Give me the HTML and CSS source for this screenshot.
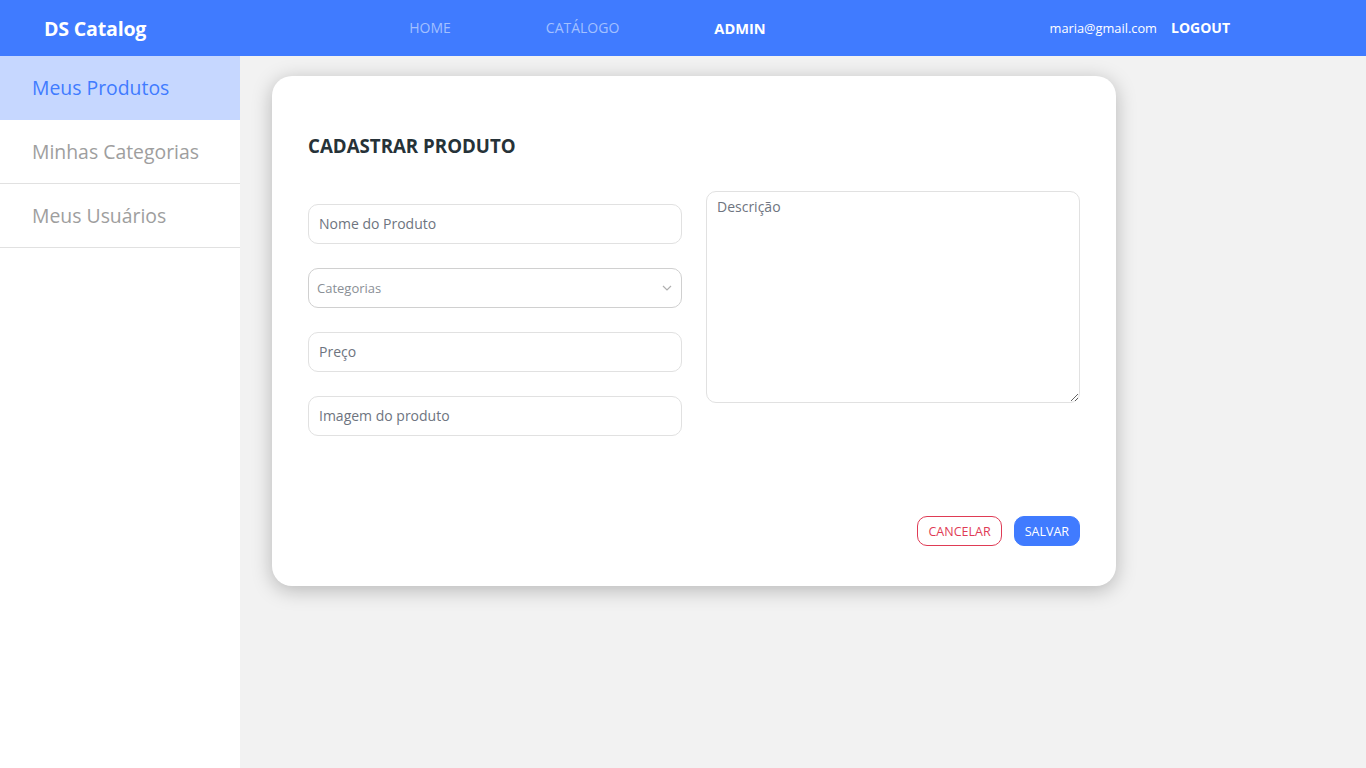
FILE: index.html
```html
<!DOCTYPE html>
<html lang="pt-BR">
<head>
<meta charset="utf-8">
<title>DS Catalog</title>
<link rel="stylesheet" href="styles.css">
</head>
<body>
<header class="navbar">
  <a class="brand" href="#">DS Catalog</a>
  <nav class="nav-links">
    <a href="#" class="nav-link">HOME</a>
    <a href="#" class="nav-link">CATÁLOGO</a>
    <a href="#" class="nav-link active">ADMIN</a>
  </nav>
  <div class="nav-user">
    <span class="user-email">maria@gmail.com</span>
    <a href="#" class="logout">LOGOUT</a>
  </div>
</header>
<div class="layout">
  <aside class="sidebar">
    <a href="#" class="side-item active">Meus Produtos</a>
    <a href="#" class="side-item">Minhas Categorias</a>
    <a href="#" class="side-item">Meus Usuários</a>
  </aside>
  <main class="content">
    <section class="card">
      <h1 class="card-title">CADASTRAR PRODUTO</h1>
      <form class="form-grid">
        <div class="col-left">
          <input class="field" type="text" placeholder="Nome do Produto">
          <div class="select-wrap">
            <select class="field select">
              <option>Categorias</option>
            </select>
            <svg class="chev" width="10" height="6" viewBox="0 0 10 6"><path d="M1 1l4 4 4-4" fill="none" stroke="#b0b0b0" stroke-width="1.2"/></svg>
          </div>
          <input class="field" type="text" placeholder="Preço">
          <input class="field" type="text" placeholder="Imagem do produto">
        </div>
        <div class="col-right">
          <textarea class="field textarea" placeholder="Descrição"></textarea>
        </div>
      </form>
      <div class="actions">
        <button class="btn btn-cancel" type="button">CANCELAR</button>
        <button class="btn btn-save" type="button">SALVAR</button>
      </div>
    </section>
  </main>
</div>
</body>
</html>
```
FILE: styles.css
```css
* { box-sizing: border-box; }
html, body { margin: 0; padding: 0; height: 100%; }
body {
  font-family: "Open Sans", "Noto Sans", sans-serif;
  background: #f2f2f2;
  color: #263238;
}
a { text-decoration: none; }

.navbar {
  height: 56px;
  background: #407bff;
  display: flex;
  align-items: center;
  padding: 0 136px 0 44px;
}
.brand {
  color: #fff;
  font-weight: 700;
  font-size: 19.6px;
  letter-spacing: -0.2px;
}
.nav-links {
  display: flex;
  gap: 95px;
  margin-left: 263px;
}
.nav-link {
  color: #a3c0ff;
  font-size: 14px;
}
.nav-link.active {
  color: #fff;
  font-weight: 700;
  font-size: 14.6px;
}
.nav-user {
  margin-left: auto;
  display: flex;
  align-items: center;
  gap: 14px;
}
.user-email {
  color: #fff;
  font-size: 12.8px;
}
.logout {
  color: #fff;
  font-weight: 700;
  font-size: 14px;
  margin-top: -2px;
}

.layout {
  display: flex;
  height: calc(100% - 56px);
}
.sidebar {
  width: 240px;
  background: #fff;
  display: flex;
  flex-direction: column;
  flex-shrink: 0;
}
.side-item {
  height: 64px;
  display: flex;
  align-items: center;
  padding-left: 32px;
  font-size: 19.4px;
  color: #9e9e9e;
  border-bottom: 1px solid #e1e1e1;
}
.side-item.active {
  background: #c6d7ff;
  color: #407bff;
  border-bottom-color: #c6d7ff;
}

.content {
  flex: 1;
  padding: 20px 32px;
}
.card {
  width: 844px;
  background: #fff;
  border-radius: 20px;
  box-shadow: 0 4px 20px rgba(0, 0, 0, 0.25);
  padding: 56px 36px 40px;
}
.card-title {
  margin: 0;
  font-size: 18.7px;
  font-weight: 700;
  line-height: 28px;
  color: #263238;
}
.form-grid {
  display: grid;
  grid-template-columns: 374px 374px;
  gap: 24px;
  margin-top: 31px;
}
.col-left {
  display: flex;
  flex-direction: column;
  gap: 24px;
  padding-top: 13px;
}
.field {
  width: 100%;
  height: 40px;
  border: 1px solid #e1e1e1;
  border-radius: 10px;
  background: #fff;
  padding: 0 10px 1px;
  font-family: "Open Sans", "Noto Sans", sans-serif;
  font-size: 14px;
  color: #263238;
  outline: none;
}
.field::placeholder { color: #6e7480; }
.select-wrap { position: relative; }
.select {
  appearance: none;
  -webkit-appearance: none;
  font-size: 13px;
  color: #8a8f96;
  padding-left: 8px;
  border-color: #d0d0d0;
}
.chev {
  position: absolute;
  right: 10px;
  top: 17px;
  pointer-events: none;
}
.textarea {
  height: 212px;
  padding: 5px 10px;
  resize: vertical;
  display: block;
}
.actions {
  display: flex;
  justify-content: flex-end;
  gap: 12px;
  margin-top: 80px;
}
.btn {
  height: 30px;
  border-radius: 10px;
  font-family: "Open Sans", "Noto Sans", sans-serif;
  font-size: 12.5px;
  padding: 0 10px;
  cursor: pointer;
}
.btn-cancel {
  background: #fff;
  border: 1px solid #df3b55;
  color: #df3b55;
}
.btn-save {
  background: #407bff;
  border: 1px solid #407bff;
  color: #fff;
}
```
